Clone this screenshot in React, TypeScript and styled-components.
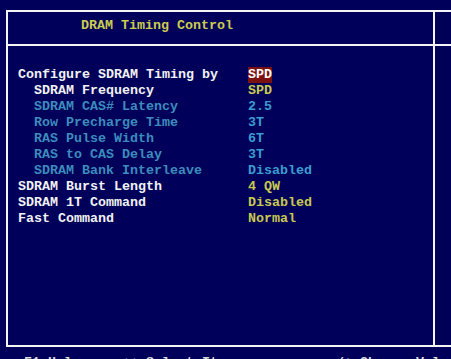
import React from 'react';
import styled, { createGlobalStyle } from 'styled-components';

const GlobalStyle = createGlobalStyle`
  html, body {
    margin: 0;
    padding: 0;
    background: #00005a;
    overflow: hidden;
  }
`;

const Screen = styled.div`
  box-sizing: border-box;
  width: 451px;
  height: 359px;
  padding: 10px 0 0 6px;
  background: #00005a;
  font-family: 'Liberation Mono', 'DejaVu Sans Mono', monospace;
  font-weight: bold;
  font-size: 13.33px;
  line-height: 16px;
  overflow: hidden;
`;

const Frame = styled.div`
  display: flex;
  flex-direction: column;
  border: 2px solid #f4f4f4;
  border-right: none;
`;

const Band = styled.div<{ $height: number; $divider?: boolean }>`
  display: grid;
  grid-template-columns: 427px 1fr;
  height: ${({ $height }) => $height}px;
  border-bottom: ${({ $divider }) => ($divider ? '2px solid #f4f4f4' : 'none')};
`;

const MainCell = styled.div`
  border-right: 2px solid #f4f4f4;
`;

const HelpCell = styled.div`
  background: #000058;
`;

const Title = styled.div`
  padding: 6px 0 0 73px;
  color: #cccc50;
`;

const List = styled.div`
  padding: 21px 0 0 10px;
`;

const Row = styled.div`
  display: grid;
  grid-template-columns: 230px 1fr;
  height: 16px;
  white-space: pre;
`;

type Tone = 'white' | 'dim' | 'yellow' | 'cyan';

const toneColor: Record<Tone, string> = {
  white: '#f2f2f2',
  dim: '#3c8cbc',
  yellow: '#c8c850',
  cyan: '#3c9cd0',
};

const Label = styled.span<{ $tone: Tone; $indent?: boolean }>`
  padding-left: ${({ $indent }) => ($indent ? 16 : 0)}px;
  color: ${({ $tone }) => toneColor[$tone]};
`;

const Value = styled.span<{ $tone: Tone; $selected?: boolean }>`
  justify-self: start;
  color: ${({ $selected, $tone }) => ($selected ? '#ffffff' : toneColor[$tone])};
  background: ${({ $selected }) => ($selected ? '#7a1010' : 'transparent')};
`;

const Footer = styled.div`
  display: flex;
  padding: 8px 0 0 18px;
  color: #d8d8d8;
  white-space: pre;
`;

const FooterItem = styled.span<{ $width: number }>`
  width: ${({ $width }) => $width}px;
`;

interface Item {
  label: string;
  value: string;
  labelTone: Tone;
  valueTone: Tone;
  indent?: boolean;
  selected?: boolean;
}

const items: Item[] = [
  { label: 'Configure SDRAM Timing by', value: 'SPD', labelTone: 'white', valueTone: 'white', selected: true },
  { label: 'SDRAM Frequency', value: 'SPD', labelTone: 'white', valueTone: 'yellow', indent: true },
  { label: 'SDRAM CAS# Latency', value: '2.5', labelTone: 'dim', valueTone: 'cyan', indent: true },
  { label: 'Row Precharge Time', value: '3T', labelTone: 'dim', valueTone: 'cyan', indent: true },
  { label: 'RAS Pulse Width', value: '6T', labelTone: 'dim', valueTone: 'cyan', indent: true },
  { label: 'RAS to CAS Delay', value: '3T', labelTone: 'dim', valueTone: 'cyan', indent: true },
  { label: 'SDRAM Bank Interleave', value: 'Disabled', labelTone: 'dim', valueTone: 'cyan', indent: true },
  { label: 'SDRAM Burst Length', value: '4 QW', labelTone: 'white', valueTone: 'yellow' },
  { label: 'SDRAM 1T Command', value: 'Disabled', labelTone: 'white', valueTone: 'yellow' },
  { label: 'Fast Command', value: 'Normal', labelTone: 'white', valueTone: 'yellow' },
];

export default function App() {
  return (
    <>
      <GlobalStyle />
      <Screen>
        <Frame>
          <Band $height={32} $divider>
            <MainCell>
              <Title>DRAM Timing Control</Title>
            </MainCell>
            <HelpCell />
          </Band>
          <Band $height={299}>
            <MainCell>
              <List>
                {items.map((item) => (
                  <Row key={item.label}>
                    <Label $tone={item.labelTone} $indent={item.indent}>
                      {item.label}
                    </Label>
                    <Value $tone={item.valueTone} $selected={item.selected}>
                      {item.value}
                    </Value>
                  </Row>
                ))}
              </List>
            </MainCell>
            <HelpCell />
          </Band>
        </Frame>
        <Footer>
          <FooterItem $width={98}>F1:Help</FooterItem>
          <FooterItem $width={206}>↑↓:Select Item</FooterItem>
          <FooterItem $width={120}>-/+:Change Value</FooterItem>
        </Footer>
      </Screen>
    </>
  );
}
